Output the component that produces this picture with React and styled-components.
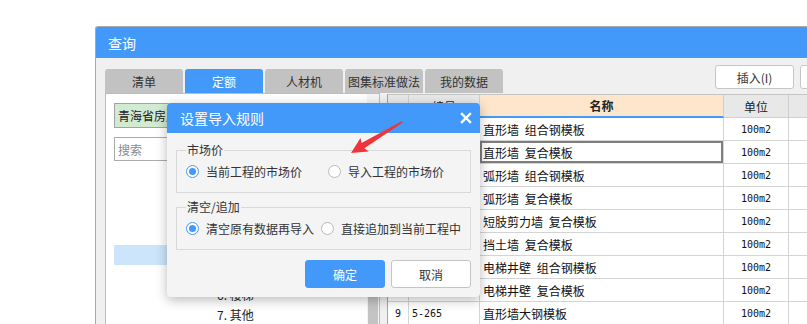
import React from 'react';
import styled, { createGlobalStyle } from 'styled-components';

const BLUE = '#4399f9';
const FONT = `"Noto Sans CJK SC", "Microsoft YaHei", "Noto Sans", sans-serif`;
const MONO = `"DejaVu Sans Mono", "Liberation Mono", monospace`;

const GlobalStyle = createGlobalStyle`
  html, body { margin: 0; padding: 0; background: #fff; overflow: hidden; }
  body { font-family: ${FONT}; font-size: 12px; color: #333; }
  * { box-sizing: border-box; }
`;

const Page = styled.div`
  position: relative;
  width: 807px;
  height: 324px;
  overflow: hidden;
  padding: 26px 0 0 95px;
`;

const Window = styled.div`
  width: 800px;
  height: 320px;
  border-top: 1px solid #a8a8a8;
  border-left: 1px solid #a8a8a8;
  border-top-left-radius: 3px;
  background: #f0f0f0;
  display: flex;
  flex-direction: column;
  overflow: hidden;
`;

const TitleBar = styled.div`
  height: 31px;
  flex: none;
  background: ${BLUE};
  color: #fff;
  font-size: 14px;
  display: flex;
  align-items: center;
  padding-left: 12px;
`;

const Toolbar = styled.div`
  margin-top: 7px;
  height: 28px;
  flex: none;
  display: flex;
  padding-left: 9px;
`;

const Tabs = styled.div`
  align-self: flex-end;
  display: flex;
  gap: 2px;
`;

const Tab = styled.div`
  width: 78px;
  height: 24px;
  border-radius: 3px 3px 0 0;
  background: ${(p) => (p.$active ? BLUE : '#c2c2c2')};
  color: ${(p) => (p.$active ? '#fff' : '#333')};
  display: flex;
  align-items: center;
  justify-content: center;
  white-space: nowrap;
  overflow: hidden;
  font-size: 12px;
`;

const ToolButtons = styled.div`
  align-self: flex-start;
  margin-left: 212px;
  display: flex;
  gap: 6px;
`;

const ToolButton = styled.div`
  width: 79px;
  height: 24px;
  border: 1px solid #c6c6c6;
  border-radius: 3px;
  background: #fff;
  display: flex;
  align-items: center;
  justify-content: center;
  color: #333;
`;

const Content = styled.div`
  flex: 1;
  display: flex;
  padding-left: 9px;
  gap: 7px;
  min-height: 0;
`;

const LeftPanel = styled.div`
  width: 275px;
  flex: none;
  background: #fff;
  border: 1px solid #bdbdbd;
  border-bottom: none;
  display: flex;
`;

const LeftInner = styled.div`
  flex: 1;
  padding: 9px 0 0 8px;
  display: flex;
  flex-direction: column;
`;

const RegionBox = styled.div`
  height: 25px;
  margin-right: 8px;
  background: #d2e9d2;
  border: 1px solid #a3a3a3;
  display: flex;
  align-items: center;
  padding-left: 3px;
  color: #222;
  white-space: nowrap;
`;

const SearchBox = styled.div`
  height: 24px;
  margin-top: 9px;
  margin-right: 8px;
  background: #fff;
  border: 1px solid #ababab;
  display: flex;
  align-items: center;
  padding-left: 3px;
  color: #8a8a8a;
`;

const Tree = styled.div`
  margin-top: 4px;
  display: flex;
  flex-direction: column;
`;

const TreeRow = styled.div`
  height: 20px;
  line-height: 20px;
  padding-left: ${(p) => p.$indent}px;
  background: ${(p) => (p.$selected ? '#cce5fa' : 'transparent')};
  color: #222;
  white-space: nowrap;
`;

const ScrollTrack = styled.div`
  width: 12px;
  flex: none;
  background: #f4f4f4;
  padding: 190px 1px 0 1px;
  display: flex;
`;

const ScrollThumb = styled.div`
  flex: 1;
  background: #c4c4c4;
`;

const Table = styled.div`
  flex: 1;
  margin-top: 1px;
  background: #fff;
  border-top: 1px solid #c4c4c4;
  border-left: 1px solid #a4a4a4;
  display: grid;
  grid-template-columns: 21px 71px 244px 65px 1fr;
  grid-auto-rows: 23px;
  align-content: start;
`;

const HeadCell = styled.div`
  background: ${(p) => p.$bg || '#e8e8e8'};
  border-right: 1px solid #cfcfcf;
  border-bottom: ${(p) => (p.$accent ? `2px solid ${BLUE}` : '1px solid #cfcfcf')};
  display: flex;
  align-items: center;
  justify-content: center;
  font-weight: ${(p) => (p.$bold ? 700 : 400)};
  color: #222;
`;

const Cell = styled.div`
  border-right: 1px solid #d4d4d4;
  border-bottom: 1px solid #d4d4d4;
  display: flex;
  align-items: center;
  justify-content: ${(p) => (p.$center ? 'center' : 'flex-start')};
  padding-left: ${(p) => (p.$center ? 0 : 3)}px;
  color: #111;
  white-space: nowrap;
  overflow: hidden;
  word-spacing: 3px;
  box-shadow: ${(p) => (p.$focus ? 'inset 0 0 0 2px #7f7f7f' : 'none')};
  font-family: ${(p) => (p.$mono ? MONO : FONT)};
  font-size: ${(p) => (p.$mono ? '10px' : '12px')};
`;

const Dialog = styled.div`
  position: absolute;
  left: 167px;
  top: 103px;
  width: 313px;
  background: #f4f4f4;
  border-radius: 4px;
  box-shadow: 0 3px 12px rgba(0, 0, 0, 0.28);
  overflow: hidden;
`;

const DialogHeader = styled.div`
  height: 30px;
  background: ${BLUE};
  color: #fff;
  font-size: 14px;
  display: flex;
  align-items: center;
  justify-content: space-between;
  padding: 0 8px 0 13px;
`;

const DialogBody = styled.div`
  padding: 8px 9px 9px;
  display: flex;
  flex-direction: column;
`;

const Group = styled.fieldset`
  margin: ${(p) => p.$mt}px 0 0;
  padding: 0 9px 9px;
  border: 1px solid #d9d9d9;
  min-width: 0;
`;

const Legend = styled.legend`
  padding: 0 1px;
  height: 18px;
  line-height: 18px;
  font-size: 12px;
  color: #333;
`;

const OptionRow = styled.div`
  height: 24px;
  display: flex;
  align-items: center;
  gap: ${(p) => p.$gap}px;
`;

const Option = styled.label`
  display: flex;
  align-items: center;
  gap: 7px;
  color: #333;
  white-space: nowrap;
`;

const Radio = styled.span`
  width: 13px;
  height: 13px;
  border-radius: 50%;
  border: 1px solid ${(p) => (p.$checked ? BLUE : '#b9b9b9')};
  background: #fff;
  display: flex;
  align-items: center;
  justify-content: center;
  &::after {
    content: '';
    width: 7px;
    height: 7px;
    border-radius: 50%;
    background: ${(p) => (p.$checked ? BLUE : 'transparent')};
  }
`;

const ButtonRow = styled.div`
  margin-top: 10px;
  display: flex;
  justify-content: flex-end;
  gap: 6px;
`;

const DlgButton = styled.div`
  width: 80px;
  height: 28px;
  border-radius: 3px;
  display: flex;
  align-items: center;
  justify-content: center;
  background: ${(p) => (p.$primary ? BLUE : '#fff')};
  color: ${(p) => (p.$primary ? '#fff' : '#333')};
  border: 1px solid ${(p) => (p.$primary ? BLUE : '#c4c4c4')};
`;

const Overlay = styled.svg`
  position: absolute;
  left: 0;
  top: 0;
  pointer-events: none;
`;

const tabs = ['清单', '定额', '人材机', '图集标准做法', '我的数据'];

const treeItems = [
  { t: '五、模板工程', i: 70 },
  { t: '1. 基础', i: 103 },
  { t: '2. 柱', i: 103 },
  { t: '3. 梁', i: 103 },
  { t: '4. 墙', i: 103, sel: true },
  { t: '5. 板', i: 103 },
  { t: '6. 楼梯', i: 103 },
  { t: '7. 其他', i: 103 },
];

const rows = [
  ['5-257', '直形墙 组合钢模板'],
  ['5-258', '直形墙 复合模板'],
  ['5-259', '弧形墙 组合钢模板'],
  ['5-260', '弧形墙 复合模板'],
  ['5-261', '短肢剪力墙 复合模板'],
  ['5-262', '挡土墙 复合模板'],
  ['5-263', '电梯井壁 组合钢模板'],
  ['5-264', '电梯井壁 复合模板'],
  ['5-265', '直形墙大钢模板'],
];

export default function App() {
  return (
    <>
      <GlobalStyle />
      <Page>
        <Window>
          <TitleBar>查询</TitleBar>
          <Toolbar>
            <Tabs>
              {tabs.map((t) => (
                <Tab key={t} $active={t === '定额'}>{t}</Tab>
              ))}
            </Tabs>
            <ToolButtons>
              <ToolButton>插入(I)</ToolButton>
              <ToolButton>替换(R)</ToolButton>
            </ToolButtons>
          </Toolbar>
          <Content>
            <LeftPanel>
              <LeftInner>
                <RegionBox>青海省房屋建筑与装饰工程计价定额</RegionBox>
                <SearchBox>搜索</SearchBox>
                <Tree>
                  {treeItems.map((it) => (
                    <TreeRow key={it.t} $indent={it.i} $selected={it.sel}>{it.t}</TreeRow>
                  ))}
                </Tree>
              </LeftInner>
              <ScrollTrack>
                <ScrollThumb />
              </ScrollTrack>
            </LeftPanel>
            <Table>
              <HeadCell />
              <HeadCell>编号</HeadCell>
              <HeadCell $bg="#fde6cb" $bold $accent>名称</HeadCell>
              <HeadCell>单位</HeadCell>
              <HeadCell>单价</HeadCell>
              {rows.map(([code, name], idx) => (
                <React.Fragment key={code}>
                  <Cell $center $mono>{idx + 1}</Cell>
                  <Cell $mono>{code}</Cell>
                  <Cell $focus={idx === 1}>{name}</Cell>
                  <Cell $center $mono>100m2</Cell>
                  <Cell />
                </React.Fragment>
              ))}
            </Table>
          </Content>
        </Window>

        <Dialog>
          <DialogHeader>
            <span>设置导入规则</span>
            <svg width="12" height="12" viewBox="0 0 12 12">
              <path d="M2 2 L10 10 M10 2 L2 10" stroke="#fff" strokeWidth="2.4" strokeLinecap="square" />
            </svg>
          </DialogHeader>
          <DialogBody>
            <Group $mt={0}>
              <Legend>市场价</Legend>
              <OptionRow $gap={26}>
                <Option><Radio $checked />当前工程的市场价</Option>
                <Option><Radio />导入工程的市场价</Option>
              </OptionRow>
            </Group>
            <Group $mt={5}>
              <Legend>清空/追加</Legend>
              <OptionRow $gap={7}>
                <Option><Radio $checked />清空原有数据再导入</Option>
                <Option><Radio />直接追加到当前工程中</Option>
              </OptionRow>
            </Group>
            <ButtonRow>
              <DlgButton $primary>确定</DlgButton>
              <DlgButton>取消</DlgButton>
            </ButtonRow>
          </DialogBody>
        </Dialog>

        <Overlay width="807" height="324" viewBox="0 0 807 324">
          <polygon
            points="351,153 360.5,137.9 361.6,143.0 401.6,121.3 402.4,122.7 364.4,148.3 368.8,151.5"
            fill="#f0353a"
          />
        </Overlay>
      </Page>
    </>
  );
}
